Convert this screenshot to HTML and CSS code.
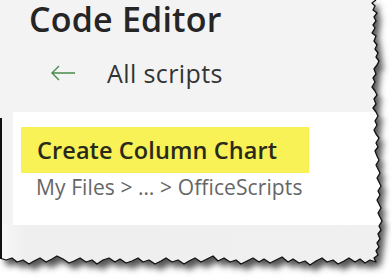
FILE: index.html
```html
<!DOCTYPE html>
<html lang="en">
<head>
  <meta charset="UTF-8" />
  <meta name="viewport" content="width=device-width, initial-scale=1.0">
  <title>Code Editor</title>
  <link rel="stylesheet" href="styles.css">
</head>
<body>
  <div class="pane">
    <h1 class="title">Code Editor</h1>

    <div class="back-row">
      <svg class="back-arrow" width="26" height="16" viewBox="0 0 26 16">
        <path d="M25 8H2M9 1L2 8l7 7" fill="none" stroke="#4a8a4e" stroke-width="1.4" />
      </svg>
      <span class="back-label">All scripts</span>
    </div>

    <div class="script-card">
      <div class="script-name">Create Column Chart</div>
      <div class="crumbs">My Files &gt; … &gt; OfficeScripts</div>
    </div>

    <div class="lower-band"></div>
  </div>

  <!-- torn paper edge drawn over the screenshot -->
  <svg class="torn-edge" width="391" height="278" viewBox="0 0 391 278">
    <defs>
      <filter id="blur" x="-10%" y="-10%" width="120%" height="120%">
        <feGaussianBlur stdDeviation="3" />
      </filter>
      <mask id="outside">
        <rect width="391" height="278" fill="white" />
        <path fill="black" d="M0 0H376L372 3L375 6L373 10L377 13L374 17L376 21L373 25L375 28L372 33L376 36L374 41L377 45L375 49L378 53L376 57L379 61L377 65L374 69L376 74L373 78L375 82L372 87L375 91L377 95L374 99L376 104L373 108L376 112L378 116L375 121L377 125L374 130L376 134L379 138L376 143L378 147L375 151L377 156L379 160L376 165L378 169L380 173L377 178L379 182L381 186L378 191L380 195L377 200L379 204L381 208L378 213L380 217L382 221L379 226L381 230L378 234L380 239L377 243L379 247L376 251L378 255L374 258L376 262L370 260L365 263L360 259L355 262L349 258L344 261L338 264L333 260L327 262L322 258L316 261L310 265L305 261L299 263L293 259L288 262L282 257L276 260L270 263L264 259L259 262L253 258L247 261L241 264L236 260L230 262L224 258L218 261L213 256L207 259L201 262L195 258L189 261L184 264L178 260L172 262L166 258L161 261L155 264L149 260L143 262L138 258L132 261L126 263L120 259L115 262L109 258L103 260L97 264L92 260L86 262L80 258L74 261L69 263L63 259L57 256L52 259L46 262L40 258L34 261L29 264L23 260L17 262L12 258L6 260L0 258Z" />
      </mask>
    </defs>
    <g mask="url(#outside)">
      <rect width="391" height="278" fill="#ffffff" />
      <path transform="translate(5 6)" filter="url(#blur)" fill="#555" d="M0 0H376L372 3L375 6L373 10L377 13L374 17L376 21L373 25L375 28L372 33L376 36L374 41L377 45L375 49L378 53L376 57L379 61L377 65L374 69L376 74L373 78L375 82L372 87L375 91L377 95L374 99L376 104L373 108L376 112L378 116L375 121L377 125L374 130L376 134L379 138L376 143L378 147L375 151L377 156L379 160L376 165L378 169L380 173L377 178L379 182L381 186L378 191L380 195L377 200L379 204L381 208L378 213L380 217L382 221L379 226L381 230L378 234L380 239L377 243L379 247L376 251L378 255L374 258L376 262L370 260L365 263L360 259L355 262L349 258L344 261L338 264L333 260L327 262L322 258L316 261L310 265L305 261L299 263L293 259L288 262L282 257L276 260L270 263L264 259L259 262L253 258L247 261L241 264L236 260L230 262L224 258L218 261L213 256L207 259L201 262L195 258L189 261L184 264L178 260L172 262L166 258L161 261L155 264L149 260L143 262L138 258L132 261L126 263L120 259L115 262L109 258L103 260L97 264L92 260L86 262L80 258L74 261L69 263L63 259L57 256L52 259L46 262L40 258L34 261L29 264L23 260L17 262L12 258L6 260L0 258Z" />
    </g>
    <path fill="none" stroke="#111" stroke-width="1.3" stroke-linejoin="round" d="M376 0L372 3L375 6L373 10L377 13L374 17L376 21L373 25L375 28L372 33L376 36L374 41L377 45L375 49L378 53L376 57L379 61L377 65L374 69L376 74L373 78L375 82L372 87L375 91L377 95L374 99L376 104L373 108L376 112L378 116L375 121L377 125L374 130L376 134L379 138L376 143L378 147L375 151L377 156L379 160L376 165L378 169L380 173L377 178L379 182L381 186L378 191L380 195L377 200L379 204L381 208L378 213L380 217L382 221L379 226L381 230L378 234L380 239L377 243L379 247L376 251L378 255L374 258L376 262L370 260L365 263L360 259L355 262L349 258L344 261L338 264L333 260L327 262L322 258L316 261L310 265L305 261L299 263L293 259L288 262L282 257L276 260L270 263L264 259L259 262L253 258L247 261L241 264L236 260L230 262L224 258L218 261L213 256L207 259L201 262L195 258L189 261L184 264L178 260L172 262L166 258L161 261L155 264L149 260L143 262L138 258L132 261L126 263L120 259L115 262L109 258L103 260L97 264L92 260L86 262L80 258L74 261L69 263L63 259L57 256L52 259L46 262L40 258L34 261L29 264L23 260L17 262L12 258L6 260L0 258" />
    <path stroke="#111" stroke-width="2" d="M1 118V259" />
  </svg>
</body>
</html>
```

FILE: styles.css
```css
body {
  margin: 0;
  background-color: #f3f3f3;
  font-family: "Open Sans", "Noto Sans", sans-serif;
  color: #252525;
  overflow: hidden;
}
.pane {
  display: flex;
  flex-direction: column;
  height: 278px;
}
.title {
  margin: 0;
  padding-left: 29px;
  font-size: 34px;
  font-weight: 600;
  line-height: 38px;
  letter-spacing: 0.2px;
}
.back-row {
  display: flex;
  align-items: center;
  gap: 31px;
  margin-top: 20px;
  padding-left: 50px;
  height: 30px;
}
.back-arrow {
  display: block;
}
.back-label {
  font-size: 25px;
  line-height: 30px;
  color: #333;
  letter-spacing: 0.4px;
}
.script-card {
  margin: 24px 0 0 13px;
  padding: 15px 0 25px 8px;
  background-color: #ffffff;
}
.script-name {
  display: inline-block;
  padding: 0 32px 0 16px;
  background-color: #f8f257;
  font-size: 23.5px;
  font-weight: 600;
  line-height: 46px;
  color: #2a2a1a;
  letter-spacing: 0.1px;
}
.crumbs {
  margin-top: 1px;
  padding-left: 15px;
  font-size: 21px;
  line-height: 26px;
  color: #666;
  letter-spacing: 0.1px;
}
.lower-band {
  flex: 1;
  background: linear-gradient(to right, #f7f7f7 0, #efefef 25px, #f0f0f0 100%);
}
.torn-edge {
  position: absolute;
  top: 0;
  left: 0;
  pointer-events: none;
}
```
